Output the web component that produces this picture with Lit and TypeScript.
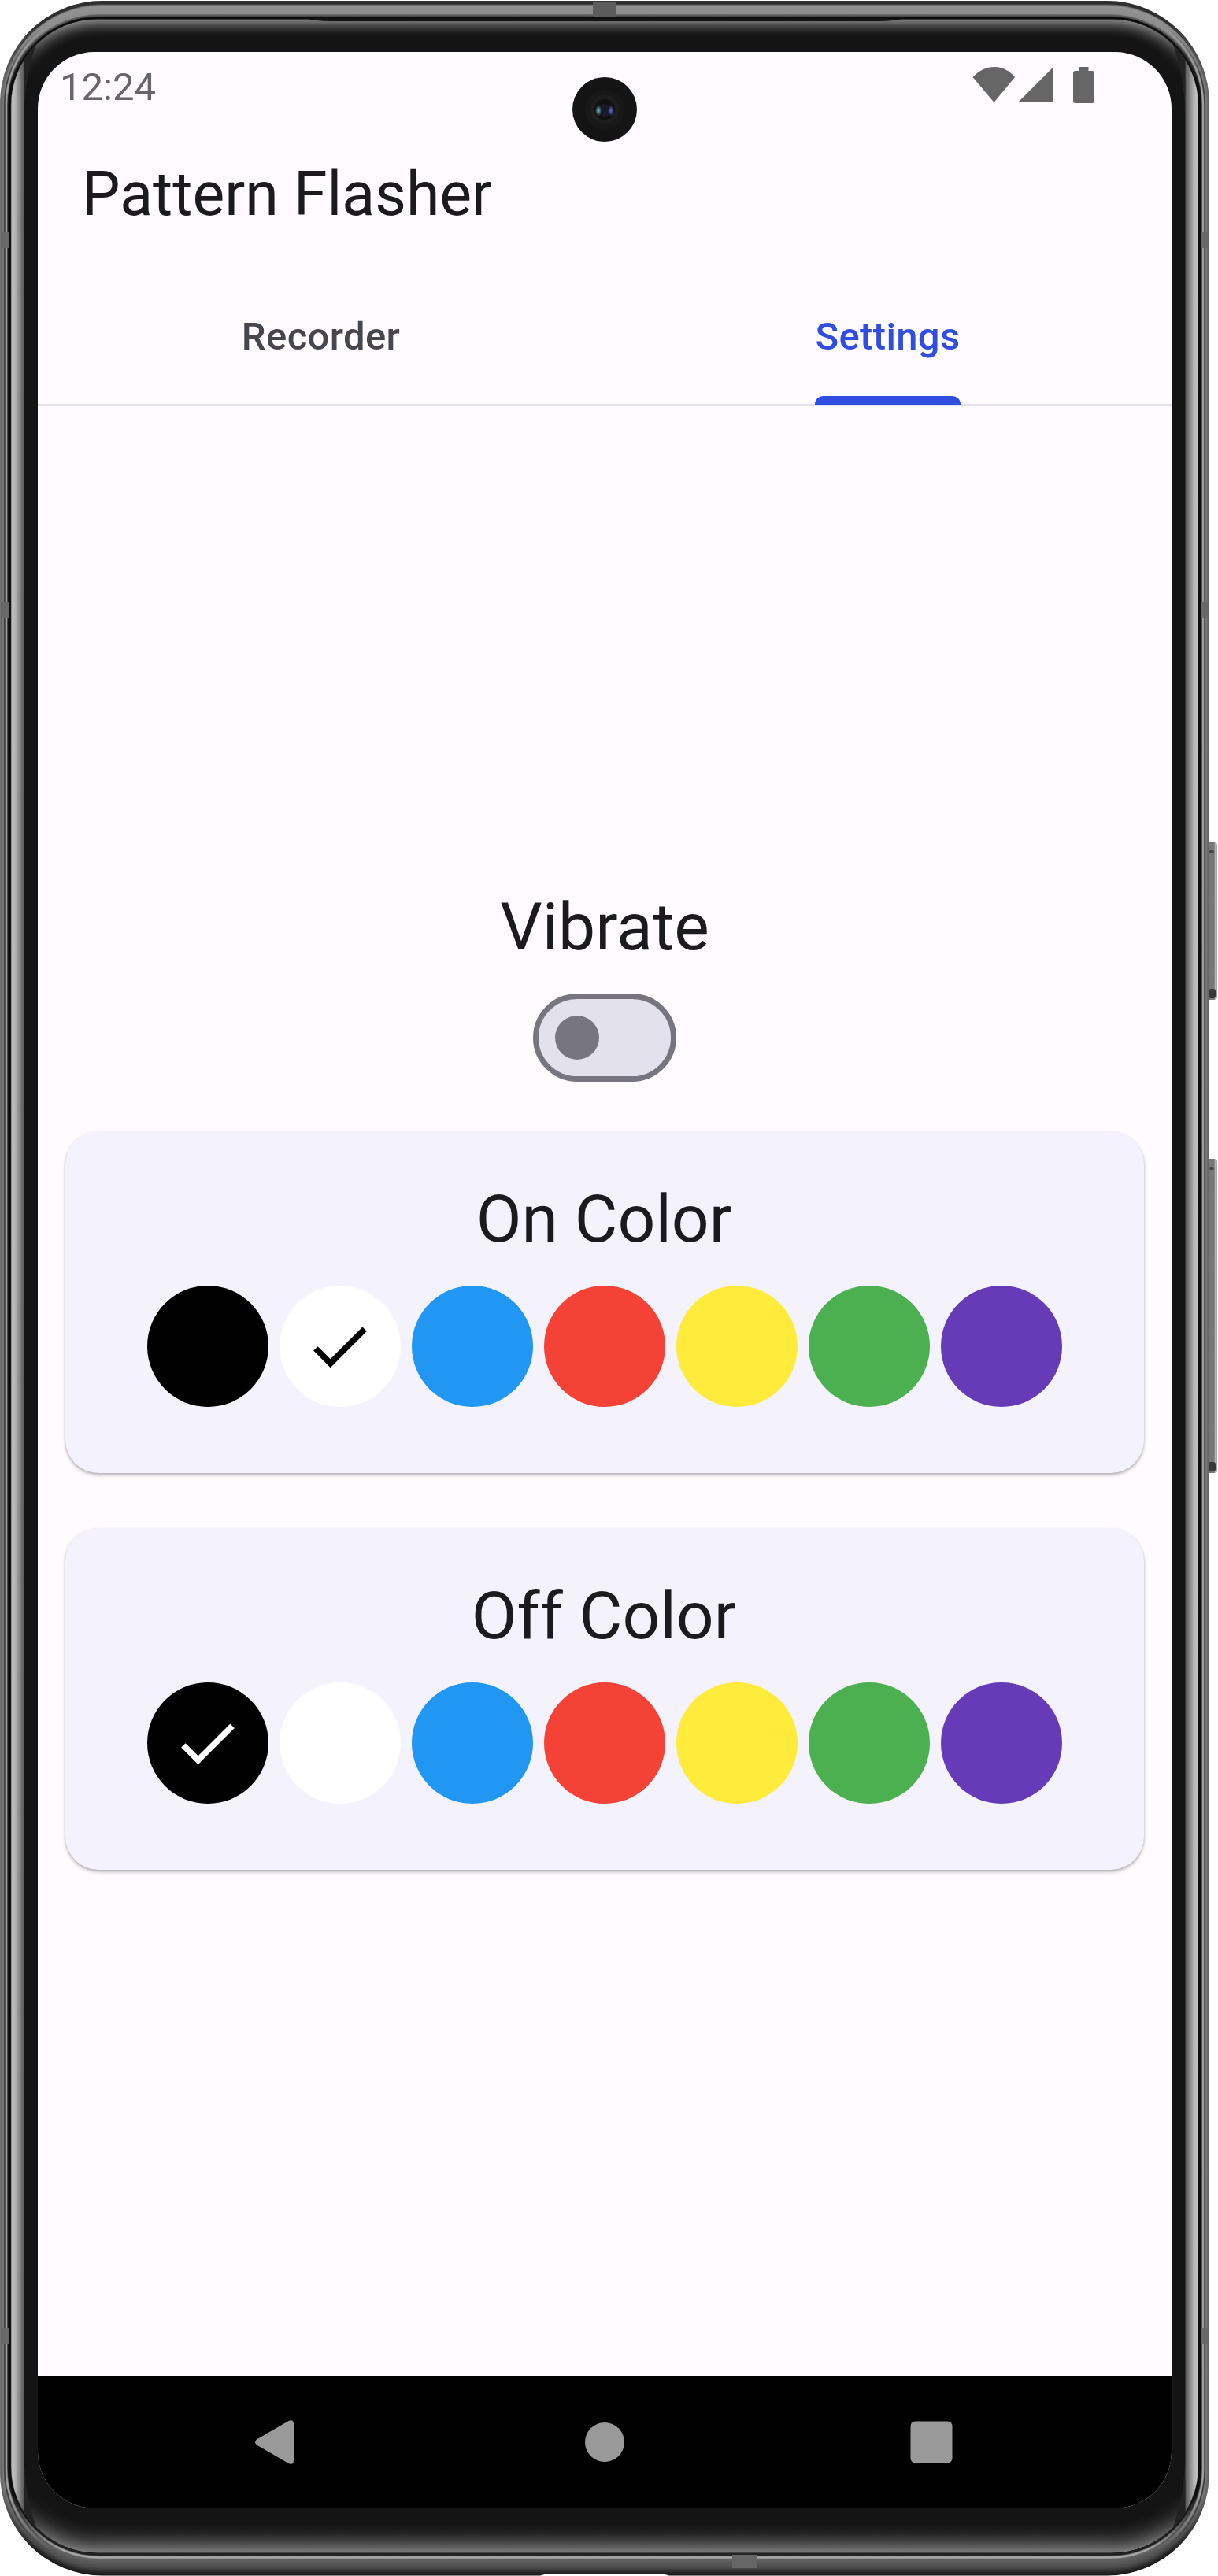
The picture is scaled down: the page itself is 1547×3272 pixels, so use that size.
import { LitElement, html, svg, css } from "lit";
import { customElement, property } from "lit/decorators.js";
import { styleMap } from "lit/directives/style-map.js";

type Stop = [number, number];

const sample = (stops: Stop[], t: number): number => {
  for (let i = 1; i < stops.length; i++) {
    if (t <= stops[i][0]) {
      const [a, va] = stops[i - 1];
      const [b, vb] = stops[i];
      return Math.round(va + ((vb - va) * (t - a)) / (b - a || 1));
    }
  }
  return stops[stops.length - 1][1];
};
const grey = (v: number) => `rgb(${v},${v},${v})`;

// Grey level across the metal rim, from the outer edge (0) to the glass (1).
const SIDE: Stop[] = [[0, 120], [0.08, 100], [0.32, 125], [0.38, 60], [0.44, 55], [0.5, 160], [0.6, 165], [0.66, 90], [0.7, 30], [0.78, 15], [0.95, 10], [1, 60]];
const TOP: Stop[] = [[0, 50], [0.17, 44], [0.24, 130], [0.3, 146], [0.72, 140], [0.76, 95], [0.84, 85], [0.87, 20], [0.97, 5], [1, 40]];
const BOTTOM: Stop[] = [[0, 25], [0.1, 34], [0.35, 75], [0.7, 98], [0.74, 110], [0.78, 175], [0.84, 160], [0.88, 60], [0.91, 15], [0.96, 50], [1, 8]];

@customElement("device-frame")
export class DeviceFrame extends LitElement {
  static styles = css`
    :host { display: block; }
    .art { display: block; width: 1547px; height: 3272px; }
  `;

  private ring(i: number, side: number, top: number, bottom: number, r: number, c: [number, number, number]) {
    const [t, s, b] = c.map(grey);
    return svg`
      <linearGradient id="g${i}" gradientUnits="userSpaceOnUse" x1="0" y1="0" x2="0" y2="3272">
        <stop offset="0.009" stop-color=${t}></stop>
        <stop offset="0.032" stop-color=${s}></stop>
        <stop offset="0.968" stop-color=${s}></stop>
        <stop offset="0.99" stop-color=${b}></stop>
      </linearGradient>
      <rect x=${side} y=${top} width=${1536 - side * 2} height=${bottom - top} rx=${r} fill="url(#g${i})"></rect>`;
  }

  render() {
    const rim = Array.from({ length: 41 }, (_, i) => {
      const t = i / 40;
      return this.ring(i, 14 * t, 1 + 23 * t, 3271.5 - 28.5 * t, 130 - 20 * t, [sample(TOP, t), sample(SIDE, t), sample(BOTTOM, t)]);
    });
    const glow = Array.from({ length: 33 }, (_, i) => {
      const t = i / 32;
      const top = Math.round(20 + 108 * Math.pow(1 - t, 1.5));
      const bottom = Math.round(20 + 104 * Math.pow(1 - t, 1.4));
      return this.ring(100 + i, 14 + 16 * t, 24.5 + 22 * t, 3243 - 38 * t, 110 - 14 * t, [top, 20, bottom]);
    });
    const bevel = "M0 50H49Q34 84 31 135V3130Q33 3175 46 3209H0Z";
    return html`<svg class="art" viewBox="0 0 1547 3272" aria-hidden="true">
      <defs>
        <linearGradient id="bevel" gradientUnits="userSpaceOnUse" x1="14" y1="0" x2="31" y2="0">
          <stop offset="0" stop-color="#777"></stop>
          <stop offset="0.1" stop-color="#c4c4c4"></stop>
          <stop offset="0.35" stop-color="#b0b0b0"></stop>
          <stop offset="0.75" stop-color="#747474"></stop>
          <stop offset="0.92" stop-color="#5c5c5c"></stop>
          <stop offset="1" stop-color="#222"></stop>
        </linearGradient>
        <linearGradient id="key" gradientUnits="userSpaceOnUse" x1="1533" y1="0" x2="1547" y2="0">
          <stop offset="0" stop-color="#333"></stop>
          <stop offset="0.15" stop-color="#777"></stop>
          <stop offset="0.65" stop-color="#777"></stop>
          <stop offset="0.75" stop-color="#b5b5b5"></stop>
          <stop offset="1" stop-color="#999"></stop>
        </linearGradient>
        <clipPath id="glass"><rect x="14" y="24.5" width="1508" height="3218" rx="110"></rect></clipPath>
      </defs>
      ${[[1070, 200], [1472, 399]].map(([y, h]) => svg`
        <rect x="1530" y=${y} width="16" height=${h} rx="4" fill="url(#key)"></rect>
        <rect x="1536" y=${y + 10} width="6" height="4" rx="2" fill="#444"></rect>
        <rect x="1535" y=${y + h - 14} width="9" height="12" rx="3" fill="#383838"></rect>`)}
      ${rim}
      ${[295, 765, 2957].map((y) => svg`
        <rect x="2" y=${y} width="9" height="20" fill="#686868"></rect>
        <rect x="1525" y=${y} width="9" height="20" fill="#686868"></rect>`)}
      <rect x="753" y="3" width="29" height="18" fill="#5c5c5c"></rect>
      <rect x="930" y="3245" width="31" height="17" fill="#666"></rect>
      <g clip-path="url(#glass)">
        ${glow}
        <path d=${bevel} fill="url(#bevel)"></path>
        <path d=${bevel} fill="url(#bevel)" transform="matrix(-1 0 0 1 1536 0)"></path>
      </g>
      <path d="M386 23Q400 27 420 27H1116Q1136 27 1150 23Z" fill="#131313"></path>
      <path d="M686 3272Q690 3269 704 3269H832Q846 3269 850 3272Z" fill="#fff"></path>
    </svg>`;
  }
}

@customElement("color-card")
export class ColorCard extends LitElement {
  @property() heading = "";
  @property() selected = "";

  static colors = ["#000000", "#ffffff", "#2196f3", "#f44336", "#ffeb3b", "#4caf50", "#673ab7"];

  static styles = css`
    :host {
      display: flex; flex-direction: column; align-items: center; gap: 28px;
      box-sizing: border-box; height: 434px; margin: 35px; padding-top: 56px;
      border-radius: 42px; background: #f3f2fd;
      box-shadow: 0 3px 4px rgba(0, 0, 0, 0.22), 0 1px 3px rgba(0, 0, 0, 0.13);
    }
    .heading { padding-right: 2px; font-size: 84px; line-height: 112px; }
    .row { display: flex; gap: 14px; }
    .swatch { display: flex; align-items: center; justify-content: center; width: 154px; height: 154px; border-radius: 50%; }
    .check { width: 92.4px; height: 92.4px; margin-right: 2px; }
  `;

  render() {
    return html`
      <div class="heading">${this.heading}</div>
      <div class="row">
        ${ColorCard.colors.map((c) => html`<div class="swatch" style=${styleMap({ background: c })}>
          ${c === this.selected
            ? html`<svg class="check" viewBox="0 0 24 24" fill=${c === "#000000" ? "#fff" : "#000"}>
                <path d="M9 16.17 4.83 12l-1.42 1.41L9 19 21 7l-1.41-1.41z"></path>
              </svg>`
            : null}
        </div>`)}
      </div>`;
  }
}

@customElement("app-root")
export class AppRoot extends LitElement {
  static styles = css`
    :host { display: block; font-family: Roboto, "Liberation Sans", sans-serif; color: #1b1b1f; }
    .device { position: relative; box-sizing: border-box; width: 1547px; height: 3272px; padding: 66px 59px 86px 48px; background: #fff; overflow: hidden; }
    .frame { position: absolute; inset: 0; }
    .screen { position: relative; display: flex; flex-direction: column; width: 1440px; height: 3120px; border-radius: 72px; overflow: hidden; background: #fffbff; }
    .camera { position: absolute; left: 679px; top: 32px; width: 82px; height: 82px; }
    .status { display: flex; justify-content: space-between; box-sizing: border-box; height: 80px; padding: 16px 98px 0 28px; color: #666; }
    .time { font-size: 49px; line-height: 58px; }
    .icons { width: 155px; height: 46px; margin-top: 3px; }
    .title { display: flex; align-items: center; height: 201px; padding-left: 56px; font-size: 77px; line-height: 90px; }
    .tabs { display: flex; box-sizing: border-box; height: 168.5px; border-bottom: 3.5px solid #e3e1ec; font-size: 49px; font-weight: 500; letter-spacing: 0.35px; }
    .tab { position: relative; flex: 1; display: flex; align-items: center; justify-content: center; padding: 0 1px 4px 0; color: #46464f; }
    .active { color: #2f4de0; }
    .active .label::after { content: ""; position: absolute; bottom: -1px; left: 50%; width: 185px; height: 10.5px; margin-left: -93px; border-radius: 10.5px 10.5px 0 0; background: #2f4de0; }
    .body { flex: 1; display: flex; flex-direction: column; justify-content: center; padding-bottom: 2px; }
    .vibrate { text-align: center; font-size: 84px; line-height: 112px; }
    .touch { display: flex; align-items: center; justify-content: center; height: 168px; }
    .switch { display: flex; align-items: center; box-sizing: border-box; width: 182px; height: 112px; padding-left: 21px; border: 7px solid #777680; border-radius: 56px; background: #e3e1ec; }
    .thumb { width: 56px; height: 56px; border-radius: 50%; background: #777680; }
    .cards { display: flex; flex-direction: column; }
    .nav { display: flex; align-items: center; justify-content: center; gap: 331px; height: 168px; background: #000; }
    .nav svg { width: 84px; height: 84px; fill: #999; }
  `;

  render() {
    return html`<div class="device">
      <device-frame class="frame"></device-frame>
      <div class="screen">
        <div class="status">
          <span class="time">12:24</span>
          <svg class="icons" viewBox="0 0 155 46">
            <g fill="currentColor">
              <path d="M0.5 13Q12 0 27.5 0T54 13L27.5 45Z"></path>
              <path d="M58 45 103 0V45Z"></path>
              <path d="M136 0H147.500V5H152Q155 5 155 8V43Q155 46 152 46H131Q128 46 128 43V8Q128 5 131 5H136Z"></path>
            </g>
          </svg>
        </div>
        <div class="title">Pattern Flasher</div>
        <div class="tabs">
          <div class="tab"><span class="label">Recorder</span></div>
          <div class="tab active"><span class="label">Settings</span></div>
        </div>
        <div class="body">
          <div class="vibrate">Vibrate</div>
          <div class="touch"><div class="switch"><div class="thumb"></div></div></div>
          <div class="cards">
            <color-card heading="On Color" selected="#ffffff"></color-card>
            <color-card heading="Off Color" selected="#000000"></color-card>
          </div>
        </div>
        <div class="nav">
          <svg viewBox="0 0 84 84"><path d="M15 38.500 56 14.700Q62 12.500 62 19V65Q62 71.500 56 69.300L15 45.500Q11 42 15 38.500Z"></path></svg>
          <svg viewBox="0 0 84 84"><circle cx="42" cy="42" r="25"></circle></svg>
          <svg viewBox="0 0 84 84"><rect x="15.500" y="15.500" width="53" height="53" rx="6"></rect></svg>
        </div>
        <svg class="camera" viewBox="0 0 82 82">
          <defs>
            <radialGradient id="teal"><stop offset="0" stop-color="#7cc4c0"></stop><stop offset="1" stop-color="#6fb0b0" stop-opacity="0"></stop></radialGradient>
            <radialGradient id="blue"><stop offset="0" stop-color="#6474dc"></stop><stop offset="1" stop-color="#5868c8" stop-opacity="0"></stop></radialGradient>
          </defs>
          <circle cx="41" cy="41" r="41" fill="#141414"></circle>
          <circle cx="41" cy="41" r="25" fill="#181818"></circle>
          <circle cx="41" cy="41" r="18" fill="#1e1e1e"></circle>
          <circle cx="41" cy="41" r="13" fill="#111112"></circle>
          <circle cx="41" cy="42" r="8" fill="#181c26"></circle>
          <ellipse cx="33" cy="42.500" rx="4" ry="7" fill="url(#teal)"></ellipse>
          <ellipse cx="49" cy="42.500" rx="4" ry="7" fill="url(#blue)"></ellipse>
        </svg>
      </div>
    </div>`;
  }
}
